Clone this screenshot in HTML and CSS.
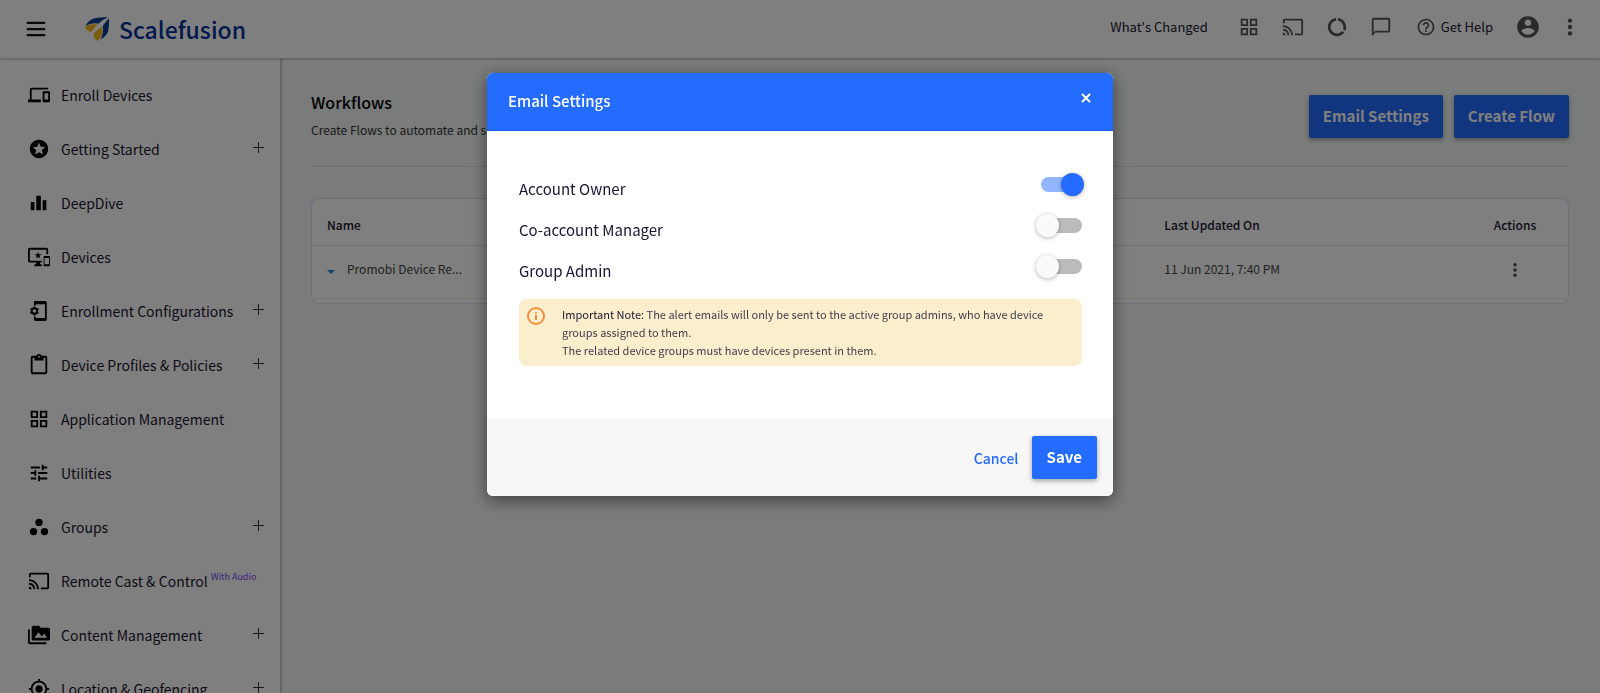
FILE: index.html
```html
<!DOCTYPE html>
<html lang="en">
<head>
  <meta charset="UTF-8">
  <meta name="viewport" content="width=device-width, initial-scale=1">
  <title>Workflows - Scalefusion</title>
  <link rel="stylesheet" href="styles.css">
</head>

<body>

<header class="topbar">
  <button class="icon-btn menu" aria-label="Menu">
    <svg class="icon" viewBox="0 0 24 24"><path d="M2 4h20v2.500H2zM2 10.800h20v2.500H2zM2 17.500h20V20H2z"/></svg>
  </button>
  <a class="logo" href="#">
    <svg class="logo-mark" viewBox="0 0 24 24">
      <path fill="#0b3f91" d="M23 0C17 .2 12 .6 8 1.800 4.500 3 2 5.500.800 9.200 5 6.500 9 5.800 13.500 6.800 16 4 19.500 1.800 23 0z"/>
      <path fill="#0b3f91" d="M24 1c.2 5 0 9-1 14-1.500 3-4 5.500-7.500 7.500 2-4.500 3-9 2.200-13.500C19.500 6.500 21.500 4 24 1z"/>
      <path fill="#f5b914" d="M0 10c4-2.800 8-3.300 12.500-2.300-2 2-4.200 4.300-5.800 7C3.500 14.800 1 13 0 10z"/>
      <path fill="#f5b914" d="M16.800 9.800c1.200 5 .2 10-4.300 14.200-2.500-1.500-4-4-4-7.200 2.300-2.600 5.500-4.800 8.300-7z"/>
    </svg>
    <span>Scalefusion</span>
  </a>
  <nav class="tools">
    <a class="whats-new" href="#">What's Changed</a>
    <button class="icon-btn" aria-label="Apps">
      <svg class="icon" viewBox="0 0 24 24"><path d="M3 3v8h8V3H3zm6 6H5V5h4v4zm-6 4v8h8v-8H3zm6 6H5v-4h4v4zm4-16v8h8V3h-8zm6 6h-4V5h4v4zm-6 4v8h8v-8h-8zm6 6h-4v-4h4v4z"/></svg>
    </button>
    <button class="icon-btn" aria-label="Cast">
      <svg class="icon" viewBox="0 0 24 24"><path d="M21 3H3c-1.100 0-2 .900-2 2v3h2V5h18v14h-7v2h7c1.100 0 2-.900 2-2V5c0-1.100-.900-2-2-2zM1 18v3h3c0-1.660-1.340-3-3-3zm0-4v2c2.760 0 5 2.240 5 5h2c0-3.870-3.130-7-7-7zm0-4v2c4.970 0 9 4.030 9 9h2c0-6.080-4.930-11-11-11z"/></svg>
    </button>
    <button class="icon-btn" aria-label="Usage">
      <svg class="icon" viewBox="0 0 24 24"><path d="M13 2.050v3.030c3.390.490 6 3.390 6 6.920 0 .900-.180 1.750-.480 2.540l2.600 1.530c.560-1.240.880-2.620.880-4.070 0-5.180-3.950-9.450-9-9.950zM12 19c-3.870 0-7-3.130-7-7 0-3.530 2.610-6.430 6-6.920V2.050c-5.060.500-9 4.760-9 9.950 0 5.520 4.470 10 9.990 10 3.310 0 6.240-1.610 8.060-4.090l-2.600-1.530C16.170 17.980 14.210 19 12 19z"/></svg>
    </button>
    <button class="icon-btn" aria-label="Messages">
      <svg class="icon" viewBox="0 0 24 24"><path d="M20 2H4c-1.100 0-2 .900-2 2v18l4-4h14c1.100 0 2-.900 2-2V4c0-1.100-.900-2-2-2zm0 14H6l-2 2V4h16v12z"/></svg>
    </button>
    <a class="help" href="#">
      <svg class="icon" viewBox="0 0 24 24"><path d="M11 18h2v-2h-2v2zm1-16C6.480 2 2 6.480 2 12s4.480 10 10 10 10-4.480 10-10S17.520 2 12 2zm0 18c-4.410 0-8-3.590-8-8s3.590-8 8-8 8 3.590 8 8-3.590 8-8 8zm0-14c-2.210 0-4 1.790-4 4h2c0-1.100.900-2 2-2s2 .900 2 2c0 2-3 1.750-3 5h2c0-2.250 3-2.500 3-5 0-2.210-1.790-4-4-4z"/></svg>
      Get Help
    </a>
    <button class="icon-btn account" aria-label="Account">
      <svg class="icon" viewBox="0 0 24 24"><path d="M12 2C6.480 2 2 6.480 2 12s4.480 10 10 10 10-4.480 10-10S17.520 2 12 2zm0 3c1.660 0 3 1.340 3 3s-1.340 3-3 3-3-1.340-3-3 1.340-3 3-3zm0 14.200c-2.500 0-4.710-1.280-6-3.220.030-1.990 4-3.080 6-3.080 1.990 0 5.970 1.090 6 3.080-1.290 1.940-3.500 3.220-6 3.220z"/></svg>
    </button>
    <button class="icon-btn more" aria-label="More">
      <svg class="icon" viewBox="0 0 24 24"><circle cx="12" cy="5" r="2.400"/><circle cx="12" cy="12" r="2.400"/><circle cx="12" cy="19" r="2.400"/></svg>
    </button>
  </nav>
</header>

<div class="layout">
<aside class="sidebar">
  <ul>
    <li><a href="#">
      <svg class="icon" viewBox="0 0 24 24"><path d="M4 6h18V4H4c-1.100 0-2 .900-2 2v11H0v3h14v-3H4V6zm19 2h-6c-.550 0-1 .450-1 1v10c0 .550.450 1 1 1h6c.550 0 1-.450 1-1V9c0-.550-.450-1-1-1zm-1 9h-4v-7h4v7z"/></svg>
      <span>Enroll Devices</span></a></li>
    <li><a href="#">
      <svg class="icon" viewBox="0 0 24 24"><path d="M11.990 2C6.470 2 2 6.480 2 12s4.470 10 9.990 10C17.520 22 22 17.520 22 12S17.520 2 11.990 2zm4.240 16L12 15.450 7.770 18l1.120-4.810-3.730-3.230 4.920-.420L12 5l1.920 4.530 4.920.420-3.730 3.230L16.230 18z"/></svg>
      <span>Getting Started</span></a><button class="expand" aria-label="Expand Getting Started"></button></li>
    <li><a href="#">
      <svg class="icon" viewBox="0 0 24 24"><path d="M3 11h4v9H3zM9 4h5v16H9zM16 9h4v11h-4z"/></svg>
      <span>DeepDive</span></a></li>
    <li><a href="#">
      <svg class="icon" viewBox="0 0 24 24"><path d="M23 11.010L18 11c-.550 0-1 .450-1 1v9c0 .550.450 1 1 1h5c.550 0 1-.450 1-1v-9c0-.550-.450-.990-1-.990zM23 20h-5v-7h5v7zM20 2H2C.890 2 0 2.890 0 4v12c0 1.100.890 2 2 2h7v2H7v2h8v-2h-2v-2h2v-2H2V4h18v5h2V4c0-1.110-.900-2-2-2zm-8.030 7L11 6l-.970 3H7l2.470 1.760-.940 2.910 2.470-1.800 2.470 1.800-.940-2.910L15 9h-3.030z"/></svg>
      <span>Devices</span></a></li>
    <li><a href="#">
      <svg class="icon" viewBox="0 0 24 24">
        <path d="M7 1h11.500c1.100 0 2 .9 2 2v18c0 1.100-.9 2-2 2H8.500c-1.100 0-2-.9-2-2v-3h2v1.500h10v-15h-10V6h-2V3c0-1 .4-2 .5-2z"/>
        <circle cx="7" cy="12" r="3" fill="none" stroke="#000" stroke-width="2"/>
        <path fill="none" stroke="#000" stroke-width="2" d="M7 7v2M7 15v2M2.700 9.500l1.700 1M9.600 13.500l1.700 1M2.700 14.500l1.700-1M9.600 10.500l1.700-1"/>
      </svg>
      <span>Enrollment Configurations</span></a><button class="expand" aria-label="Expand Enrollment Configurations"></button></li>
    <li><a href="#">
      <svg class="icon" viewBox="0 0 24 24"><path d="M19 2h-4.180C14.400.840 13.300 0 12 0c-1.300 0-2.400.840-2.820 2H5c-1.100 0-2 .900-2 2v16c0 1.100.900 2 2 2h14c1.100 0 2-.900 2-2V4c0-1.100-.900-2-2-2zm-7 0c.550 0 1 .450 1 1s-.450 1-1 1-1-.450-1-1 .450-1 1-1zm7 18H5V4h2v3h10V4h2v16z"/></svg>
      <span>Device Profiles &amp; Policies</span></a><button class="expand" aria-label="Expand Device Profiles"></button></li>
    <li><a href="#">
      <svg class="icon" viewBox="0 0 24 24"><path d="M3 3v8h8V3H3zm6 6H5V5h4v4zm-6 4v8h8v-8H3zm6 6H5v-4h4v4zm4-16v8h8V3h-8zm6 6h-4V5h4v4zm-6 4v8h8v-8h-8zm6 6h-4v-4h4v4z"/></svg>
      <span>Application Management</span></a></li>
    <li><a href="#">
      <svg class="icon" viewBox="0 0 24 24"><path d="M3 17v2h6v-2H3zM3 5v2h10V5H3zm10 16v-2h8v-2h-8v-2h-2v6h2zM7 9v2H3v2h4v2h2V9H7zm14 4v-2H11v2h10zm-6-4h2V7h4V5h-4V3h-2v6z"/></svg>
      <span>Utilities</span></a></li>
    <li><a href="#">
      <svg class="icon" viewBox="0 0 24 24"><circle cx="12" cy="7" r="4"/><circle cx="6" cy="17" r="4"/><circle cx="18" cy="17" r="4"/></svg>
      <span>Groups</span></a><button class="expand" aria-label="Expand Groups"></button></li>
    <li><a href="#">
      <svg class="icon" viewBox="0 0 24 24"><path d="M21 3H3c-1.100 0-2 .900-2 2v3h2V5h18v14h-7v2h7c1.100 0 2-.900 2-2V5c0-1.100-.900-2-2-2zM1 18v3h3c0-1.660-1.340-3-3-3zm0-4v2c2.760 0 5 2.240 5 5h2c0-3.870-3.130-7-7-7zm0-4v2c4.970 0 9 4.030 9 9h2c0-6.080-4.930-11-11-11z"/></svg>
      <span>Remote Cast &amp; Control</span><small class="tag">With Audio</small></a></li>
    <li><a href="#">
      <svg class="icon" viewBox="0 0 24 24"><path d="M2 6H0v5h.010L0 20c0 1.100.900 2 2 2h18v-2H2V6zm20-2h-8l-2-2H6c-1.100 0-1.990.900-1.990 2L4 16c0 1.100.900 2 2 2h16c1.100 0 2-.900 2-2V6c0-1.100-.900-2-2-2zM7 15l4.500-6 3.500 4.510 2.500-3.010L21 15H7z"/></svg>
      <span>Content Management</span></a><button class="expand" aria-label="Expand Content Management"></button></li>
    <li><a href="#">
      <svg class="icon" viewBox="0 0 24 24"><path d="M12 8c-2.210 0-4 1.790-4 4s1.790 4 4 4 4-1.790 4-4-1.790-4-4-4zm8.940 3c-.460-4.170-3.770-7.480-7.940-7.940V1h-2v2.060C6.830 3.520 3.520 6.830 3.060 11H1v2h2.060c.460 4.170 3.770 7.480 7.940 7.940V23h2v-2.060c4.170-.460 7.480-3.770 7.940-7.940H23v-2h-2.060zM12 19c-3.870 0-7-3.130-7-7s3.130-7 7-7 7 3.130 7 7-3.130 7-7 7z"/></svg>
      <span>Location &amp; Geofencing</span></a><button class="expand" aria-label="Expand Location"></button></li>
  </ul>
</aside>

<main class="content">
  <div class="page-head">
    <div>
      <h1>Workflows</h1>
      <p>Create Flows to automate and schedule recurring tasks</p>
    </div>
    <div class="page-actions">
      <button class="btn">Email Settings</button>
      <button class="btn">Create Flow</button>
    </div>
  </div>

  <div class="card">
    <table>
      <thead>
        <tr><th>Name</th><th>Last Updated On</th><th class="actions">Actions</th></tr>
      </thead>
      <tbody>
        <tr>
          <td><span class="caret"></span>Promobi Device Re...</td>
          <td>11 Jun 2021, 7:40 PM</td>
          <td class="actions">
            <button class="icon-btn row-menu" aria-label="Row actions">
              <svg class="icon" viewBox="0 0 24 24"><circle cx="12" cy="5" r="2.400"/><circle cx="12" cy="12" r="2.400"/><circle cx="12" cy="19" r="2.400"/></svg>
            </button>
          </td>
        </tr>
      </tbody>
    </table>
  </div>
</main>
</div>

<div class="overlay">
  <form class="modal" role="dialog" aria-labelledby="modal-title">
    <div class="modal-head">
      <h2 id="modal-title">Email Settings</h2>
      <button type="button" class="close" aria-label="Close">
        <svg viewBox="0 0 10 10"><path d="M1 1l8 8M9 1l-8 8"/></svg>
      </button>
    </div>
    <div class="modal-body">
      <div class="option">
        <label for="owner">Account Owner</label>
        <input class="switch" type="checkbox" id="owner" checked>
      </div>
      <div class="option">
        <label for="manager">Co-account Manager</label>
        <input class="switch" type="checkbox" id="manager">
      </div>
      <div class="option">
        <label for="admin">Group Admin</label>
        <input class="switch" type="checkbox" id="admin">
      </div>
      <div class="note">
        <svg class="note-icon" viewBox="0 0 18 18"><circle cx="9" cy="9" r="8"/><path d="M9 8v5M9 5v1.500"/></svg>
        <p><b>Important Note:</b> The alert emails will only be sent to the active group admins, who have device groups assigned to them.<br>
        The related device groups must have devices present in them.</p>
      </div>
    </div>
    <div class="modal-foot">
      <button type="button" class="link-btn">Cancel</button>
      <button class="btn">Save</button>
    </div>
  </form>
</div>

</body>
</html>
```

FILE: styles.css
```css
* {
    box-sizing: border-box;
}
body {
    margin: 0;
    height: 100vh;
    overflow: hidden;
    display: flex;
    flex-direction: column;
    background: #f4f8f6;
    color: #1a1530;
    font: 14px/20px "Noto Sans CJK SC", "Noto Sans", sans-serif;
}
h1, h2, p, ul {
    margin: 0;
    padding: 0;
}
a {
    color: inherit;
    text-decoration: none;
}
button {
    border: 0;
    padding: 0;
    background: none;
    font: inherit;
    cursor: pointer;
}
.icon {
    display: block;
    width: 22px;
    height: 22px;
    fill: currentColor;
}
.icon-btn {
    color: #555;
}

/* top bar */
.topbar {
    position: relative;
    display: flex;
    align-items: center;
    height: 58px;
    flex: none;
    padding: 0 19px 0 25px;
    background: #fff;
    box-shadow: 0 1px 3px rgba(0, 0, 0, .3);
}
.menu {
    color: #1a1020;
}
.logo {
    display: flex;
    align-items: center;
    gap: 10px;
    margin-left: 38px;
    color: #00329a;
    font-size: 23px;
    font-weight: 500;
    line-height: 32px;
}
.logo-mark {
    width: 24px;
    height: 24px;
}
.tools {
    display: flex;
    align-items: center;
    gap: 22px;
    margin-left: auto;
    padding-bottom: 4px;
    font-size: 13px;
}
.whats-new {
    margin-right: 8px;
}
.help {
    display: flex;
    align-items: center;
    gap: 5px;
    margin-left: 2px;
}
.help .icon {
    color: #555;
    width: 20px;
    height: 20px;
}
.account .icon {
    width: 26px;
    height: 26px;
}
.more {
    margin-left: -4px;
}

/* side menu */
.layout {
    display: flex;
    flex: 1;
    min-height: 0;
}
.sidebar {
    width: 280px;
    flex: none;
    padding-top: 10px;
    overflow: hidden;
    background: #fff;
    box-shadow: 1px 0 3px rgba(0, 0, 0, .3);
}
.sidebar ul {
    list-style: none;
}
.sidebar li {
    display: flex;
    align-items: center;
    justify-content: space-between;
    height: 54px;
    padding: 0 16px 0 28px;
}
.sidebar a {
    display: flex;
    align-items: center;
    gap: 11px;
}
.sidebar .icon {
    color: #000;
}
.tag {
    margin: 0 0 8px -8px;
    color: #7a3ff2;
    font-size: 9px;
    line-height: 12px;
}
.expand {
    width: 11px;
    height: 11px;
    margin: 0 0 4px;
    background:
        linear-gradient(#333, #333) center / 11px 1px no-repeat,
        linear-gradient(#333, #333) center / 1px 11px no-repeat;
}

/* page */
.content {
    flex: 1;
    padding: 32px 31px 0;
}
.page-head {
    display: flex;
    justify-content: space-between;
    align-items: flex-start;
    height: 77px;
    border-bottom: 1px solid #dadde0;
}
.page-head h1 {
    color: #000;
    font-size: 16px;
    font-weight: 500;
    line-height: 24px;
}
.page-head p {
    margin-top: 6px;
    font-size: 12px;
    color: #333;
}
.page-actions {
    display: flex;
    gap: 11px;
    margin-top: 5px;
}
.btn {
    height: 43px;
    padding: 0 15px 2px;
    border-radius: 2px;
    background: #246bff;
    color: #fff;
    font-size: 15px;
    font-weight: 700;
    box-shadow: 0 2px 5px rgba(0, 0, 0, .35);
}
.page-actions .btn {
    padding: 0 14px 2px;
}
.card {
    margin-top: 31px;
    padding-bottom: 4px;
    border: 1px solid #dcdcf5;
    border-radius: 8px;
    background: #fff;
}
table {
    width: 100%;
    table-layout: fixed;
    border-collapse: collapse;
}
th, td {
    padding: 0 15px;
    border-bottom: 1px solid #dcdfe2;
    text-align: left;
    font-size: 12px;
}
th {
    height: 46px;
    padding-top: 6px;
    font-weight: 500;
}
th:first-child {
    width: calc(100% / 3 * 2);
}
td {
    height: 53px;
    padding-bottom: 5px;
    color: #444;
    border-color: #eceef0;
}
.actions {
    width: 106px;
    text-align: center;
}
.row-menu {
    vertical-align: middle;
}
.row-menu .icon {
    width: 18px;
    height: 18px;
}
.caret {
    display: inline-block;
    margin-right: 12px;
    border: 4px solid transparent;
    border-top-color: #1e88e5;
    border-bottom: 0;
}

/* email settings dialog */
.overlay {
    position: fixed;
    inset: 0;
    display: flex;
    justify-content: center;
    align-items: flex-start;
    padding-top: 73px;
    background: rgba(0, 0, 0, .5);
}
.modal {
    width: 626px;
    max-width: 100%;
    border-radius: 6px;
    overflow: hidden;
    background: #fff;
    box-shadow: 0 4px 16px rgba(0, 0, 0, .5);
}
.modal-head {
    display: flex;
    justify-content: space-between;
    align-items: center;
    height: 58px;
    padding: 0 22px 2px 21px;
    background: #246bff;
    border-bottom: 1px solid #145fff;
    color: #fff;
}
.modal-head h2 {
    font-size: 15px;
    font-weight: 500;
}
.close {
    margin-bottom: 6px;
}
.close svg {
    display: block;
    width: 10px;
    height: 10px;
    fill: none;
    stroke: #fff;
    stroke-width: 2;
}
.modal-body {
    padding: 38px 31px 53px 32px;
}
.option {
    display: flex;
    justify-content: space-between;
    height: 41px;
}
.option label {
    padding-top: 10px;
    font-size: 15px;
}
.switch {
    appearance: none;
    position: relative;
    width: 41px;
    height: 15px;
    margin: 8px 0 0;
    border-radius: 8px;
    background: #bbb;
    cursor: pointer;
}
.switch::before {
    content: "";
    position: absolute;
    top: -4px;
    left: -5px;
    width: 23px;
    height: 23px;
    border-radius: 50%;
    background: #fafafa;
    box-shadow: 0 1px 4px rgba(0, 0, 0, .3);
}
.switch:checked {
    background: #91b5ff;
}
.switch:checked::before {
    left: 20px;
    background: #246bff;
}
.note {
    display: flex;
    align-items: flex-start;
    gap: 17px;
    margin-top: 7px;
    padding: 6px 8px 7px;
    border-radius: 8px;
    background: #faeecc;
    font-size: 11px;
    line-height: 18px;
}
.note p {
    color: #443c4e;
}
.note b {
    color: #1a1530;
    font-weight: 400;
}
.note-icon {
    flex: none;
    width: 18px;
    height: 18px;
    margin-top: 2px;
    fill: none;
    stroke: #f58f3c;
    stroke-width: 2;
}
.modal-foot {
    display: flex;
    justify-content: flex-end;
    align-items: center;
    gap: 13px;
    height: 77px;
    padding: 0 16px;
    background: #f7f7f7;
}
.link-btn {
    color: #246bff;
    font-size: 14px;
    font-weight: 500;
}
```
